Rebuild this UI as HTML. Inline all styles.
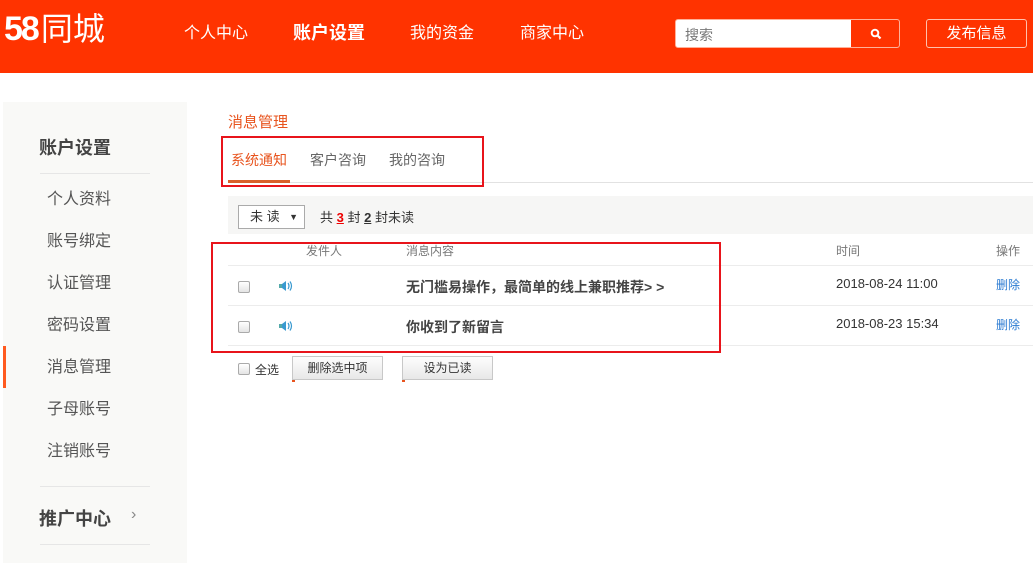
<!DOCTYPE html>
<html><head><meta charset="utf-8"><style>
*{margin:0;padding:0;box-sizing:border-box}
body{width:1033px;height:563px;overflow:hidden;background:#fff;font-family:"Liberation Sans","Noto Sans CJK SC",sans-serif;color:#333;position:relative}
.abs{position:absolute}
.hdr{left:0;top:0;width:1033px;height:73px;background:#ff3300}
.logo{left:4px;top:9px;color:#fff;font-size:34px;font-weight:bold;letter-spacing:-2px;line-height:40px}
.nav{top:24px;color:#fff;font-size:16px;line-height:20px}
.side{left:3px;top:102px;width:184px;height:461px;background:#f9f9f7}
.si{left:47px;font-size:16px;color:#555;line-height:20px}
.line{height:1px;background:#e6e6e6}
.red{border:2px solid #e8141b}
.cb{width:12px;height:12px;border:1px solid #aaa;border-radius:2px;background:linear-gradient(#fff,#e4e4e4)}
.btn{height:24px;border:1px solid #c8c8c8;background:linear-gradient(#fdfdfd,#e8e8e8);font-size:12px;text-align:center;line-height:22px;color:#333}
</style></head><body>
<div class="abs hdr"></div>
<div class="abs logo">58<span style="font-weight:normal;font-size:32px;letter-spacing:0;margin-left:3px">同城</span></div>
<div class="abs nav" style="left:184px">个人中心</div>
<div class="abs nav" style="left:293px;top:23px;font-weight:bold;font-size:18px">账户设置</div>
<div class="abs nav" style="left:410px">我的资金</div>
<div class="abs nav" style="left:520px">商家中心</div>
<div class="abs" style="left:675px;top:19px;width:225px;height:29px;background:#fff;border:1px solid #ffb199;border-radius:3px;overflow:hidden">
<span style="position:absolute;left:9px;top:5px;font-size:14px;color:#777">搜索</span>
<div style="position:absolute;left:175px;top:0;width:50px;height:29px;background:#ff3300"></div>
<svg style="position:absolute;left:194px;top:8px" width="12" height="12" viewBox="0 0 12 12"><circle cx="5" cy="5" r="3.3" fill="none" stroke="#fff" stroke-width="2"/><path d="M7.5 7.5L10.5 10.5" stroke="#fff" stroke-width="2.2"/></svg>
</div>
<div class="abs" style="left:926px;top:19px;width:101px;height:29px;border:1px solid #ffc1ad;border-radius:3px;color:#fff;font-size:15px;text-align:center;line-height:27px">发布信息</div>

<div class="abs side"></div>
<div class="abs" style="left:39px;top:134px;font-size:18px;font-weight:bold;color:#444">账户设置</div>
<div class="abs line" style="left:40px;top:173px;width:110px"></div>
<div class="abs si" style="top:190px">个人资料</div>
<div class="abs si" style="top:232px">账号绑定</div>
<div class="abs si" style="top:274px">认证管理</div>
<div class="abs si" style="top:316px">密码设置</div>
<div class="abs" style="left:3px;top:346px;width:3px;height:42px;background:#ff5a1f"></div>
<div class="abs si" style="top:358px">消息管理</div>
<div class="abs si" style="top:400px">子母账号</div>
<div class="abs si" style="top:442px">注销账号</div>
<div class="abs line" style="left:40px;top:486px;width:110px"></div>
<div class="abs" style="left:39px;top:505px;font-size:18px;font-weight:bold;color:#444">推广中心</div>
<div class="abs" style="left:131px;top:506px;font-size:16px;color:#888">›</div>
<div class="abs line" style="left:40px;top:544px;width:110px"></div>

<div class="abs" style="left:228px;top:111px;font-size:15px;color:#e8541e">消息管理</div>
<div class="abs line" style="left:228px;top:182px;width:805px;background:#e2e2e2"></div>
<div class="abs" style="left:231px;top:150px;font-size:14px;color:#e8541e">系统通知</div>
<div class="abs" style="left:228px;top:180px;width:62px;height:3px;background:#d8602a"></div>
<div class="abs" style="left:310px;top:150px;font-size:14px;color:#666">客户咨询</div>
<div class="abs" style="left:389px;top:150px;font-size:14px;color:#666">我的咨询</div>
<div class="abs red" style="left:221px;top:136px;width:263px;height:51px"></div>

<div class="abs" style="left:228px;top:196px;width:805px;height:38px;background:#f6f6f5"></div>
<div class="abs" style="left:238px;top:205px;width:67px;height:24px;border:1px solid #aaa;background:#fff;font-size:13px;line-height:22px;padding-left:11px">未 读<span style="position:absolute;right:6px;font-size:9px">▼</span></div>
<div class="abs" style="left:320px;top:207px;font-size:13px">共 <b style="color:#e00;text-decoration:underline">3</b> 封 <b style="text-decoration:underline">2</b> 封未读</div>

<div class="abs" style="left:306px;top:242px;font-size:12px;color:#777">发件人</div>
<div class="abs" style="left:406px;top:242px;font-size:12px;color:#777">消息内容</div>
<div class="abs" style="left:836px;top:242px;font-size:12px;color:#777">时间</div>
<div class="abs" style="left:996px;top:242px;font-size:12px;color:#777">操作</div>
<div class="abs line" style="left:228px;top:265px;width:805px;background:#ececec"></div>
<div class="abs line" style="left:228px;top:305px;width:805px;background:#ececec"></div>
<div class="abs line" style="left:228px;top:345px;width:805px;background:#ececec"></div>
<div class="abs cb" style="left:238px;top:281px"></div>
<div class="abs cb" style="left:238px;top:321px"></div>
<svg class="abs" style="left:279px;top:280px" width="14" height="12" viewBox="0 0 14 12"><rect x="0" y="4" width="3" height="4" fill="#5aa"/><path d="M3 4L7 1V11L3 8Z" fill="#3a9ad0"/><path d="M9 3Q11 6 9 9M11 1.5Q14 6 11 10.5" stroke="#3a9ad0" fill="none" stroke-width="1.2"/></svg>
<svg class="abs" style="left:279px;top:320px" width="14" height="12" viewBox="0 0 14 12"><rect x="0" y="4" width="3" height="4" fill="#5aa"/><path d="M3 4L7 1V11L3 8Z" fill="#3a9ad0"/><path d="M9 3Q11 6 9 9M11 1.5Q14 6 11 10.5" stroke="#3a9ad0" fill="none" stroke-width="1.2"/></svg>
<div class="abs" style="left:406px;top:277px;font-size:14px;font-weight:bold;color:#444">无门槛易操作，最简单的线上兼职推荐&gt; &gt;</div>
<div class="abs" style="left:406px;top:317px;font-size:14px;font-weight:bold;color:#444">你收到了新留言</div>
<div class="abs" style="left:836px;top:276px;font-size:13px">2018-08-24 11:00</div>
<div class="abs" style="left:836px;top:316px;font-size:13px">2018-08-23 15:34</div>
<div class="abs" style="left:996px;top:276px;font-size:12px;color:#2a7ad2">删除</div>
<div class="abs" style="left:996px;top:316px;font-size:12px;color:#2a7ad2">删除</div>
<div class="abs red" style="left:211px;top:242px;width:510px;height:111px"></div>

<div class="abs cb" style="left:238px;top:363px"></div>
<div class="abs" style="left:255px;top:361px;font-size:12px">全选</div>
<div class="abs btn" style="left:292px;top:356px;width:91px">删除选中项</div>
<div class="abs btn" style="left:402px;top:356px;width:91px">设为已读</div>
<div class="abs" style="left:292px;top:380px;width:3px;height:2px;background:#e8541e"></div>
<div class="abs" style="left:402px;top:380px;width:3px;height:2px;background:#e8541e"></div>
</body></html>
